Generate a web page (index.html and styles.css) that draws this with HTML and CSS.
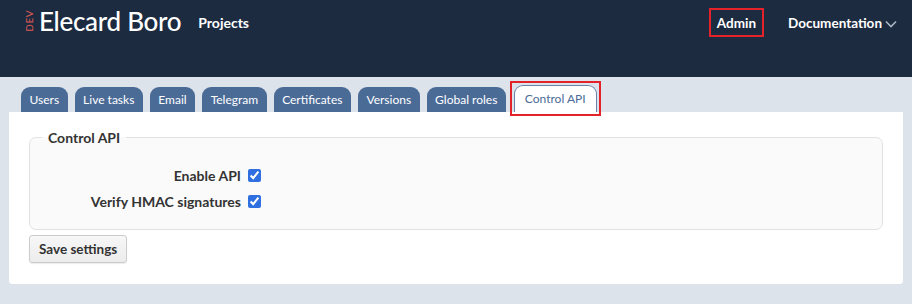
FILE: index.html
```html
<!DOCTYPE html>
<html lang="en">
<head>
    <meta charset="UTF-8">
    <title>Elecard Boro - Admin</title>
    <link rel="stylesheet" href="styles.css">
</head>
<body>

    <header class="topbar">
        <div class="brand">
            <span class="dev-mark">DEV</span>
            <span class="brand-name">Elecard Boro</span>
        </div>
        <nav class="main-nav">
            <a class="nav-link" href="#">Projects</a>
        </nav>
        <nav class="right-nav">
            <a class="nav-link nav-active" href="#">Admin</a>
            <a class="nav-link nav-drop" href="#">Documentation
                <svg width="14" height="10" viewBox="0 0 14 10"><path d="M2 2.5 L7 7.5 L12 2.5" fill="none" stroke="#aab4c2" stroke-width="1.6"/></svg>
            </a>
        </nav>
    </header>

    <main class="content">
        <ul class="tabs">
            <li class="tab">Users</li>
            <li class="tab">Live tasks</li>
            <li class="tab">Email</li>
            <li class="tab">Telegram</li>
            <li class="tab">Certificates</li>
            <li class="tab">Versions</li>
            <li class="tab">Global roles</li>
            <li class="tab tab-current">Control API</li>
        </ul>

        <section class="panel">
            <fieldset class="group">
                <legend>Control API</legend>
                <div class="field">
                    <label for="enableApi">Enable API</label>
                    <input type="checkbox" id="enableApi" checked>
                </div>
                <div class="field">
                    <label for="verifyHmac">Verify HMAC signatures</label>
                    <input type="checkbox" id="verifyHmac" checked>
                </div>
            </fieldset>
            <button class="btn">Save settings</button>
        </section>
    </main>

</body>
</html>
```

FILE: styles.css
```css
body {
    margin: 0;
    font-family: 'Lato', 'Open Sans', sans-serif;
    background: #dce3ea;
    color: #333;
}

/* Top header */
.topbar {
    height: 77px;
    background: #1c2b40;
    display: flex;
    align-items: flex-start;
    padding: 0 0 0 24px;
    box-sizing: border-box;
}

.brand {
    display: flex;
    align-items: center;
    height: 42px;
}

.dev-mark {
    writing-mode: vertical-rl;
    transform: rotate(180deg);
    color: #e05a55;
    font-size: 10px;
    letter-spacing: 0.5px;
    margin-right: 5px;
    line-height: 10px;
}

.brand-name {
    color: #fff;
    font-size: 26px;
    font-weight: 500;
    letter-spacing: -0.3px;
}

.main-nav {
    margin-left: 17px;
}

.nav-link {
    color: #fff;
    font-size: 14px;
    font-weight: bold;
    text-decoration: none;
    display: inline-flex;
    align-items: center;
    height: 29px;
    margin-top: 8px;
}

.right-nav {
    margin-left: auto;
    display: flex;
    margin-right: 14px;
}

.right-nav .nav-link {
    font-size: 13.5px;
}

.nav-active {
    border: 2px solid #e3222a;
    padding: 0 6px;
    box-sizing: border-box;
    margin-right: 24px;
}

.nav-drop svg {
    margin-left: 2px;
    margin-top: 2px;
}

/* Tabs + panel */
.content {
    padding: 8px 9px 0 9px;
}

.tabs {
    list-style: none;
    margin: 0;
    padding: 0 0 0 12px;
    display: flex;
    gap: 7px;
    align-items: flex-end;
}

.tab {
    background: #4b6b97;
    color: #fff;
    font-size: 12px;
    height: 25px;
    line-height: 26px;
    padding: 0 8.5px;
    border-radius: 9px 9px 0 0;
}

.tab-current {
    position: relative;
    background: #fff;
    color: #4b6b97;
    border: 1px solid #6a82a8;
    border-bottom: none;
    height: 26px;
    margin-left: 1px;
    padding: 0 10px;
}

/* red highlight box drawn over the active tab */
.tab-current::after {
    content: "";
    position: absolute;
    left: -5px;
    right: -5px;
    top: -5px;
    bottom: -4px;
    border: 2px solid #e3222a;
}

.panel {
    background: #fff;
    padding: 17px 20px 21px 20px;
    border-radius: 0 0 3px 3px;
}

.group {
    margin: 0;
    border: 1px solid #e2e2e2;
    border-radius: 7px;
    background: #fafafa;
    padding: 16px 0 15px 0;
}

.group legend {
    font-size: 14px;
    font-weight: bold;
    color: #333;
    margin-left: 12px;
    padding: 0 6px;
}

.field {
    display: flex;
    align-items: center;
    height: 26px;
}

.field label {
    width: 211px;
    text-align: right;
    font-size: 14px;
    font-weight: bold;
    color: #333;
}

.field input {
    margin: 0 0 0 7px;
    width: 13px;
    height: 13px;
    accent-color: #2f6fe0;
}

.btn {
    margin-top: 5px;
    font-family: inherit;
    font-size: 13.5px;
    font-weight: bold;
    color: #333;
    background: linear-gradient(#f7f7f7, #ececec);
    border: 1px solid #ccc;
    border-radius: 3px;
    height: 28px;
    padding: 0 9px;
    box-shadow: 0 1px 1px rgba(0, 0, 0, 0.08);
}
```
